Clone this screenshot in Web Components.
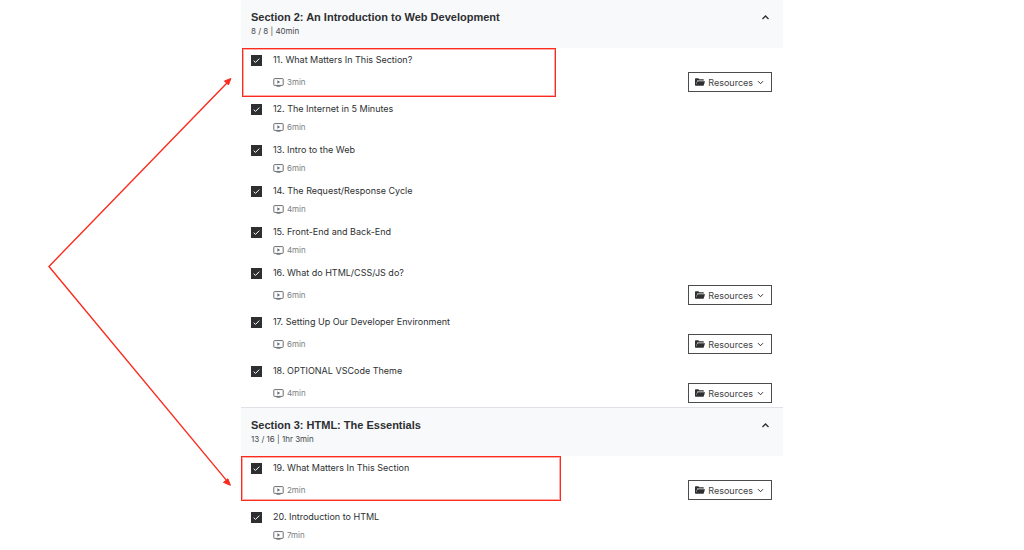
<!DOCTYPE html>
<html lang="en">
<head>
<meta charset="utf-8">
<meta name="viewport" content="width=device-width, initial-scale=1">
<title>Course content</title>
<style>
  body { margin: 0; background: #fff; color: #2d2f31; font-family: Inter, "Liberation Sans", sans-serif; }
</style>
</head>
<body>
<course-page>
  <pointer-arrows slot="aside"></pointer-arrows>
  <course-section heading="Section 2: An Introduction to Web Development" summary="8 / 8 | 40min">
    <course-lecture heading="11. What Matters In This Section?" length="3min" resources marked></course-lecture>
    <course-lecture heading="12. The Internet in 5 Minutes" length="6min"></course-lecture>
    <course-lecture heading="13. Intro to the Web" length="6min"></course-lecture>
    <course-lecture heading="14. The Request/Response Cycle" length="4min"></course-lecture>
    <course-lecture heading="15. Front-End and Back-End" length="4min"></course-lecture>
    <course-lecture heading="16. What do HTML/CSS/JS do?" length="6min" resources></course-lecture>
    <course-lecture heading="17. Setting Up Our Developer Environment" length="6min" resources></course-lecture>
    <course-lecture heading="18. OPTIONAL VSCode Theme" length="4min" resources></course-lecture>
  </course-section>
  <course-section heading="Section 3: HTML: The Essentials" summary="13 / 16 | 1hr 3min">
    <course-lecture heading="19. What Matters In This Section" length="2min" resources marked="wide"></course-lecture>
    <course-lecture heading="20. Introduction to HTML" length="7min"></course-lecture>
  </course-section>
</course-page>

<script>
class CoursePage extends HTMLElement {
  constructor() {
    super();
    this.attachShadow({ mode: 'open' }).innerHTML = `
      <style>
        :host { display: grid; grid-template-columns: 4fr 9fr 4fr; align-items: start; }
        main { min-width: 0; }
      </style>
      <slot name="aside"></slot>
      <main><slot></slot></main>`;
  }
}

class PointerArrows extends HTMLElement {
  constructor() {
    super();
    this.attachShadow({ mode: 'open' }).innerHTML = `
      <style>
        :host { display: block; }
        svg { display: block; width: 100%; }
      </style>
      <svg viewBox="0 0 241 500" fill="none" stroke="#fb2b1d" stroke-width="1.4" aria-hidden="true">
        <path d="M227 83 49 266.500 227 481"/>
        <path d="M231 78.500 228.500 85 224.500 81Z M230.500 485.500 228 479 223.500 482.500Z" fill="#fb2b1d" stroke-width="1"/>
      </svg>`;
  }
}

class CourseSection extends HTMLElement {
  constructor() {
    super();
    this.attachShadow({ mode: 'open' }).innerHTML = `
      <style>
        :host { display: block; margin-top: -1px; }
        h2 { margin: 0; font: inherit; }
        button {
          display: grid; grid-template-columns: 1fr auto; width: 100%; box-sizing: border-box;
          margin: 0; padding: 9px 13px 10px 10px; border: 0; border-top: 1px solid #dfe3e8;
          background: #f8f9fb; color: inherit; font: inherit; text-align: left;
        }
        .title { font-family: "Liberation Sans", Arial, sans-serif; font-size: 11px; line-height: 16px; font-weight: 700; }
        .summary { grid-column: 1; font-size: 8px; line-height: 13px; color: #44474a; }
        svg { width: 9px; height: 16px; }
      </style>
      <h2><button type="button" aria-expanded="true">
        <span class="title"></span>
        <svg viewBox="0 0 9 16" fill="none" stroke="#2d2f31" stroke-width="1.3" aria-hidden="true"><path d="M1.500 10 4.500 7 7.500 10"/></svg>
        <span class="summary"></span>
      </button></h2>
      <slot></slot>`;
  }
  connectedCallback() {
    this.shadowRoot.querySelector('.title').textContent = this.getAttribute('heading');
    this.shadowRoot.querySelector('.summary').textContent = this.getAttribute('summary');
  }
}

class ResourcesButton extends HTMLElement {
  constructor() {
    super();
    this.attachShadow({ mode: 'open' }).innerHTML = `
      <style>
        :host { display: block; }
        button {
          display: flex; align-items: center; gap: 3px; height: 20px; padding: 0 7px 0 6px;
          border: 1px solid #4a4c4e; background: #fff; color: #3e4143; font: inherit; font-size: 9px;
        }
        .folder { width: 10px; height: 8px; }
        .caret { width: 7px; height: 5px; margin-left: 1px; }
      </style>
      <button type="button" aria-haspopup="menu">
        <svg class="folder" viewBox="0 0 10 8" fill="#2d2f31" aria-hidden="true"><path d="M0 1Q0 .3.700.3H3.300L4.300 1.300H8.200Q8.900 1.300 8.900 2V2.500H2.200L.700 5.200 0 6Z"/><path d="M2.600 3.200H10L8.800 7.300Q8.700 7.700 8.200 7.700H.500Z"/><path d="M0 1V7.500H1L2 3V1Z"/></svg>
        <span>Resources</span>
        <svg class="caret" viewBox="0 0 7 5" fill="none" stroke="#2d2f31" aria-hidden="true"><path d="M1 1.200 3.500 3.700 6 1.200"/></svg>
      </button>`;
  }
}

class CourseLecture extends HTMLElement {
  constructor() {
    super();
    this.attachShadow({ mode: 'open' }).innerHTML = `
      <style>
        :host { display: block; position: relative; padding: 4px 11px 5px 10px; }
        :host([marked])::after {
          content: ""; position: absolute; top: 0; left: 1px; width: 58%; height: 49px;
          box-sizing: border-box; border: 1px solid #fb2b1d; outline: 1px solid #fb2b1d66; outline-offset: -2px; pointer-events: none;
        }
        :host([marked="wide"])::after { left: 0; width: 59%; height: 45px; }
        label { display: flex; align-items: center; gap: 11px; font-size: 9px; line-height: 16px; margin-bottom: 4px; }
        .box { display: grid; width: 11px; height: 11px; }
        .box > * { grid-area: 1 / 1; width: 11px; height: 11px; margin: 0; }
        input { appearance: none; background: #2d2f31; }
        .box svg { pointer-events: none; }
        input:not(:checked) + svg { visibility: hidden; }
        .details { display: flex; align-items: center; justify-content: space-between; min-height: 12px; padding-left: 22px; }
        .length { display: flex; align-items: center; gap: 3px; font-size: 8px; line-height: 12px; color: #7b7f83; }
        .length svg { width: 11px; height: 9px; }
      </style>
      <label>
        <span class="box">
          <input type="checkbox" checked>
          <svg viewBox="0 0 11 11" fill="none" stroke="#fff" aria-hidden="true"><path d="M2.700 5.700 4.500 7.400 8.300 3.600"/></svg>
        </span>
        <span class="title"></span>
      </label>
      <div class="details">
        <span class="length">
          <svg viewBox="0 0 11 9" fill="none" stroke="#6a6f73" aria-hidden="true"><rect x=".8" y=".6" width="9.400" height="6.800" rx=".6"/><path d="M3.500 8.200H7.500"/><path d="M4.300 2.200 7.200 4 4.300 5.800Z" fill="#6a6f73" stroke="none"/></svg>
          <span class="time"></span>
        </span>
      </div>`;
  }
  connectedCallback() {
    this.shadowRoot.querySelector('.title').textContent = this.getAttribute('heading');
    this.shadowRoot.querySelector('.time').textContent = this.getAttribute('length');
    const details = this.shadowRoot.querySelector('.details');
    if (this.hasAttribute('resources') && details.children.length === 1) {
      details.append(document.createElement('resources-button'));
    }
  }
}

customElements.define('course-page', CoursePage);
customElements.define('pointer-arrows', PointerArrows);
customElements.define('course-section', CourseSection);
customElements.define('resources-button', ResourcesButton);
customElements.define('course-lecture', CourseLecture);
</script>
</body>
</html>
